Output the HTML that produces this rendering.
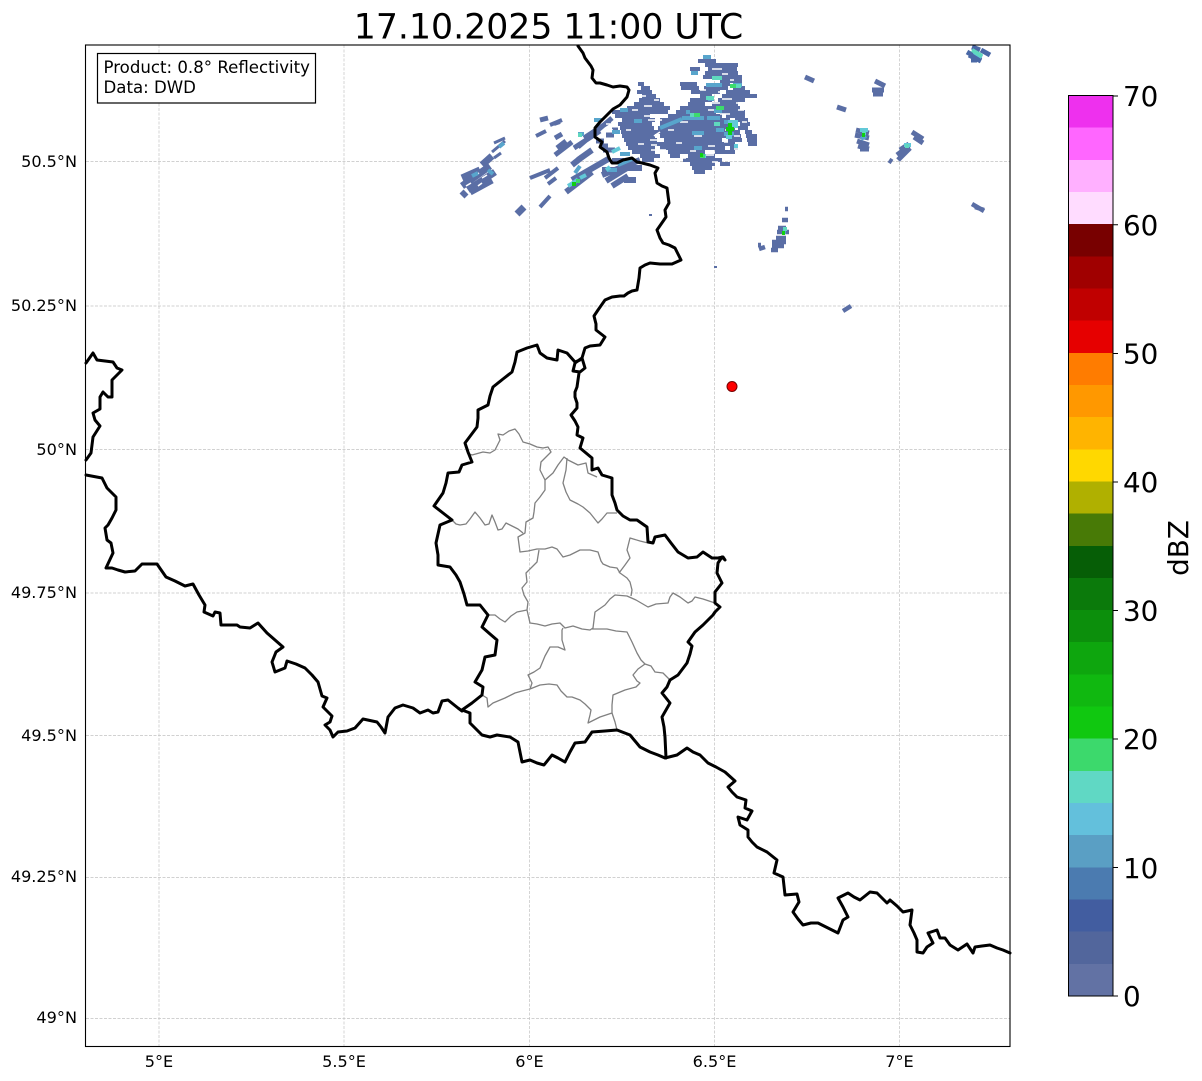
<!DOCTYPE html>
<html><head><meta charset="utf-8"><style>
html,body{margin:0;padding:0;background:#fff}
svg{display:block}
text{font-family:"DejaVu Sans","Liberation Sans",sans-serif;fill:#000}
</style></head><body>
<svg width="1202" height="1081" viewBox="0 0 1202 1081" xmlns="http://www.w3.org/2000/svg">
<rect width="1202" height="1081" fill="#fff"/>
<text x="548.5" y="38.5" font-size="34.7" text-anchor="middle">17.10.2025 11:00 UTC</text>

<!-- grid -->
<g stroke="#c2c2c2" stroke-width="0.7" stroke-dasharray="3 1.5" fill="none">
<path d="M159 45V1046M344 45V1046M529.5 45V1046M714.5 45V1046M899.5 45V1046"/>
<path d="M86 161.5H1010M86 306H1010M86 449.5H1010M86 593H1010M86 735.5H1010M86 877.5H1010M86 1018.5H1010"/>
</g>

<!-- radar: main mass rows -->
<g fill="none" stroke="#5a6ea5" stroke-width="4">
<path d="M698 61h18M705 65h33M690 69h10M708 69h29M705 73h33M703 77h39M720 81h22
M638 84h6M680 84h17M720 84h10M641 88h9M681 88h18M704 88h24M733 88h12M637 92h15M691 92h29M726 92h24
M642 96h14M700 96h12M722 96h35M639 100h21M690 100h22M718 100h27M634 104h30M688 104h17M712 104h26
M627 108h43M680 108h36M722 108h18M612 112h56M676 112h40M720 112h25M615 116h35M668 116h54M726 116h19
M622 120h33M660 120h70M735 120h13M618 124h34M660 124h75M740 124h10M620 128h34M658 128h77M738 128h10
M621 132h33M654 132h86M745 132h7M622 136h33M660 136h81M746 136h11M624 140h33M664 140h58M728 140h14M747 140h10
M626 144h30M656 144h79M748 144h9M628 148h27M660 148h65M730 148h8M632 152h23M668 152h37M715 152h20
M640 156h20M670 156h10M688 156h27M642 160h12M683 160h39M690 164h25M720 164h10M692 168h20M694 172h11"/>
<!-- west of main / border region -->
<path stroke-width="5" d="M578 147L612 118M584 138L610 121M574 148L600 131M603 150h12M600 146h8M596 141h8M612 130h6M606 135h8
M555 155L572 142M557 148L566 141M555 138L562 134M540 120L548 118"/>
<path d="M606 181L632 165M602 175L640 160M612 186L628 176M618 168h24M602 170h20M612 161h12M624 180h12" stroke-width="6"/>
<path d="M566 192L592 172M572 180L610 158M578 160L592 150M572 165L582 157" stroke-width="6"/>
<path d="M530 178L550 170M545 178L558 168M548 184L556 178M540 207L550 196M536 136L546 131" stroke-width="4"/>
<path d="M517 214L524 207" stroke-width="7"/>
<path d="M550 125L562 120M554 124L560 122" stroke-width="4"/>
<path d="M494 143L505 138M492 152L505 141M494 158L501 153" stroke-width="3"/>
<!-- west cell -->
<path d="M462 178L480 170M462 186L490 166M468 190L495 172M470 192L492 180M482 165L492 156M462 196L466 192" stroke-width="7"/>
<!-- small eastern cells -->
<path d="M805 77l9 4M837 107l9 3M875 81l10 5M872 90h12M873 94h10M856 130l13 3M855 135l14 3M857 141l12 4M858 146l11 3M860 149h9M889 160l3 2M898 160l12-12M897 155l12-9M900 150l9-6M912 132l11 7M914 137l9 6" stroke-width="5"/>
<path d="M969 55l12 6M967 52l14 8M972 47l8 3M981 50l9 5M971 60h6" stroke-width="5" stroke="#4a68a6"/>
<path d="M972 204l12 7M975 207l9 3M843 311l8-5M759 249l6-2M758 245h3M771 250h7M772 246h12M772 242h14M776 238h10M777 232h12M778 228h8M782 220h6M785 209h3" stroke-width="4.5"/>
<path d="M714 267h3M649 215h3" stroke-width="2"/>
</g>
<!-- white gaps -->
<g fill="none" stroke="#fff" stroke-width="1.6">
<path d="M644 116h22M648 120h14M652 124h8M650 140h8M651 145h6M651 150h6M654 136l6-4M606 124h12M606 130h7M608 139h9M610 146h5
M698 82h8M722 74h6M712 69h10M730 80h4M700 90h6M718 92h6M722 99h10M712 103h8M736 103h6M708 110h6M720 114h10M738 110h6M742 122h5M725 130h8M734 136h6M724 142h4M734 149h5M708 146h7M690 151h6M680 158h6M706 155h8M712 162h6
M680 122h8M668 130h6M694 136h8M676 143h6M660 150h6M640 96h6M626 130h5M638 144h6M632 110h6M644 106h8M654 100h5
M474 176l5-3M466 186l5-3M482 178l5-3M478 186l4-3"/>
</g>

<!-- highlights -->
<g fill="none" stroke-width="4">
<path stroke="#58a5cc" d="M703 57h8M691 73h7M706 85h16M733 85h9M708 99h6M714 111h8M707 118h13M660 128l22-9M682 118h22M692 133h12M716 130h8M724 134h10M724 122h10M694 148h8M686 112h4M620 110h8M594 120h8M612 132h8M620 154h10M618 165l14-6M607 170h10M575 173l5-7M634 121h8M499 147l5-4M472 176l6-3M488 170l5 4M572 184l6-5M578 134h6M783 232h3M866 136l-5 3" />
<path stroke="#62c9d8" d="M728 122h10M728 126h10M726 137h6M734 146h4M860 130h8M904 145h7M974 52l8 5M612 152l8-4M700 156h6M568 186l10-6M580 178l6-3M606 170l4-3"/>
<path stroke="#5fd8be" d="M712 78h10M733 86h8M706 98h8M714 124h6M690 115h8M578 135h4M972 50l10 6M862 133h4M905 146h4M783 229h4"/>
<path stroke="#3ddb6c" d="M694 115h6M730 86h6M716 108h8M700 156h5M576 181h4"/>
<path stroke="#10d010" d="M726 129h8M728 133h4M728 125h4M572 184h4M700 155h3M862 135h3M782 233h3" />
</g>

<!-- Lux cantons -->
<g fill="none" stroke="#808080" stroke-width="1.3" stroke-linejoin="round">
<path d="M467 453L472 455L483 452L490 453L495 450L500 440L498 434L503 435L509 431L515 429L519 434L523 442L530 444L537 447L543 448L548 447L551 452L545 458L541 462L540 470L543 476L545 480L545 490L540 497L535 503L534 512L533 518L526 522L525 533L518 537L520 552L528 551L537 549L545 549L552 547L557 549L563 557L570 555L580 550L590 550L598 552L601 561L603 564L610 567L617 568L620 573L627 578L630 582L632 590L631 596"/>
<path d="M452 520L456 524L460 525L466 524L470 519L475 512L480 518L485 525L489 524L492 515L495 522L498 530L502 529L506 523L512 526L518 529L523 533"/>
<path d="M545 480L553 473L558 465L564 457L568 460L574 463L578 465L586 463L588 473L597 477"/>
<path d="M567 458L566 470L563 483L566 492L570 500L578 504L583 507L590 513L598 523L602 519L607 513L617 513"/>
<path d="M648 543L640 541L630 538L627 550L630 558L625 565L619 573"/>
<path d="M539 550L537 562L531 568L526 573L527 582L522 588L524 595L528 602L527 610L530 623L537 624L545 626L552 624L560 623L565 628L573 626L582 629L590 630L593 628L595 612L605 605L610 599L615 595L627 596L636 600L648 607L656 604L668 603L670 597L673 593L680 597L688 603L692 601L695 597L703 599L715 603"/>
<path d="M592 629L607 629L616 631L627 632L632 642L637 653L641 660L645 664L651 666L655 672L663 673L670 680"/>
<path d="M645 664L638 669L633 675L637 681L640 683L636 687L625 690L613 695L612 705L612 713L600 717L588 723L590 715L591 710L585 704L580 700L572 697L567 697L561 691L557 685L549 684L540 685L530 689L522 691L515 693L505 698L493 703L488 707L487 698L482 695"/>
<path d="M612 713L615 722L617 730"/>
<path d="M530 689L532 683L528 675L534 672L540 668L545 656L550 647L558 647L565 650L562 640L562 630L563 628"/>
<path d="M488 615L495 615L500 619L505 622L511 616L517 612L527 610"/>
</g>

<!-- borders -->
<g fill="none" stroke="#000" stroke-width="3" stroke-linejoin="round" stroke-linecap="round">
<path d="M578 46L583 53L585 58L588 62L591 66L593 70L592 78L596 83L600 83L607 85L613 87L620 86L627 87L629 90L627 97L620 105L613 109L607 115L600 122L595 128L595 137L602 142L600 147L607 152L609 158L612 163L617 163L623 160L632 158L637 162L642 163L650 165L658 168L655 173L657 183L662 186L667 188L669 203L665 210L666 217L657 230L660 238L663 243L669 245L675 248L678 254L681 260L672 264L660 264L650 263L645 265L640 268L639 278L637 290L632 291L628 293L624 296L620 296L612 297L605 300L598 310L594 316L596 324L596 330L605 337L600 345L590 346L585 348L582 358L585 368L580 372L573 371L575 363L582 358M579 373L578 380L577 387L575 392L575 397L577 403L577 408L571 415L575 421L578 427L577 435L583 438L580 448L586 453L592 458L592 470L598 468L602 475L612 478L612 495L615 503L617 510L623 516L630 520L637 520L647 527L648 542L653 543L655 537L665 535L671 543L678 552L688 558L697 557L703 552L712 558L718 558L723 557L725 560L722 557L718 563L717 573L722 583L715 592L715 603L720 607L715 612L713 615L708 620L703 625L695 632L688 642L692 646L690 654L687 663L678 675L670 680L667 687L662 693L670 703L666 710L662 717L664 727L665 737L666 758"/>
<path d="M580 360L575 362L567 353L558 350L557 360L547 358L540 353L537 345L527 348L517 352L515 362L512 372L503 379L493 387L490 396L488 405L478 410L478 418L477 427L471 435L465 443L468 452L472 462L462 465L459 472L448 473L446 483L443 493L434 506L443 513L452 520L440 525L436 543L438 555L438 565L450 567L456 575L460 582L464 594L467 605L480 605L488 615L482 627L490 634L497 640L495 655L485 657L482 670L475 682L483 687L482 695L472 703L462 710L470 713L470 723L476 729L482 735L490 737L497 735L510 737L518 742L520 752L522 762L530 760L537 763L544 765L552 755L558 758L565 762L570 752L575 743L585 742L592 732L605 731L617 730L630 735L635 741L640 747L650 752L658 755L665 758L677 755L687 748L693 752L700 755L708 763L716 767L725 772L735 781L728 787L732 792L737 797L746 800L745 808L752 811L747 820L738 817L740 825L748 830L748 837L752 842L757 847L767 852L777 860L774 873L783 877L784 886L785 895L797 894L799 902L793 912L798 919L803 925L811 923L818 923L828 928L838 933L843 920L848 917L843 907L838 898L848 893L854 897L860 900L870 892L877 893L882 898L887 903L890 900L897 906L903 912L912 910L910 925L914 933L917 940L917 952L923 953L927 947L933 943L928 933L937 930L940 938L945 938L950 945L958 950L967 944L973 953L975 947L982 946L990 945L997 948L1003 950L1010 953"/>
<path d="M86 363L93 353L97 360L105 361L113 362L117 368L122 370L112 380L112 397L108 397L103 392L100 397L100 409L93 413L95 420L100 426L93 437L92 445L91 453L86 460"/>
<path d="M86 475L102 478L107 488L116 497L116 510L112 518L108 525L105 528L107 540L111 543L113 553L106 568L112 568L118 570L125 572L135 571L142 564L157 564L166 577L175 581L185 586L193 584L199 595L205 605L204 612L213 616L215 612L220 613L221 625L237 625L240 627L250 628L258 623L267 633L275 640L283 647L276 652L272 662L275 672L285 668L287 661L296 664L305 668L312 675L318 682L322 696L327 698L323 707L332 716L330 722L325 725L330 730L333 737L338 732L347 731L355 728L363 719L377 722L381 727L385 733L388 717L395 708L403 705L413 708L420 713L428 710L433 713L438 712L442 701L448 700L458 708L462 711"/>
</g>

<!-- spines -->
<rect x="85.5" y="45" width="924.5" height="1001.5" fill="none" stroke="#000" stroke-width="1.1"/>

<!-- red marker -->
<circle cx="732" cy="386.5" r="5" fill="#ff0000" stroke="#700" stroke-width="1"/>

<!-- note -->
<rect x="97.5" y="53.5" width="218" height="49.5" fill="#fff" stroke="#000" stroke-width="1.2"/>
<text x="103.5" y="73" font-size="16.6">Product: 0.8° Reflectivity</text>
<text x="103.5" y="93" font-size="16.6">Data: DWD</text>

<!-- tick labels -->
<g font-size="16.1" text-anchor="end">
<text x="77" y="167">50.5°N</text>
<text x="77" y="311">50.25°N</text>
<text x="77" y="455">50°N</text>
<text x="77" y="598">49.75°N</text>
<text x="77" y="741">49.5°N</text>
<text x="77" y="882">49.25°N</text>
<text x="77" y="1023">49°N</text>
</g>
<g font-size="16.1" text-anchor="middle">
<text x="159" y="1067">5°E</text>
<text x="344" y="1067">5.5°E</text>
<text x="529.5" y="1067">6°E</text>
<text x="714.5" y="1067">6.5°E</text>
<text x="899.5" y="1067">7°E</text>
</g>

<!-- colorbar -->
<g shape-rendering="crispEdges">
<rect x="1068" y="95.5" width="45" height="33" fill="#ee30ee"/>
<rect x="1068" y="127.7" width="45" height="33" fill="#ff66ff"/>
<rect x="1068" y="159.8" width="45" height="33" fill="#ffb0ff"/>
<rect x="1068" y="192" width="45" height="33" fill="#ffdcff"/>
<rect x="1068" y="224.2" width="45" height="33" fill="#780000"/>
<rect x="1068" y="256.3" width="45" height="33" fill="#a00000"/>
<rect x="1068" y="288.5" width="45" height="33" fill="#c00000"/>
<rect x="1068" y="320.6" width="45" height="33" fill="#e60000"/>
<rect x="1068" y="352.8" width="45" height="33" fill="#ff7c00"/>
<rect x="1068" y="385" width="45" height="33" fill="#ff9800"/>
<rect x="1068" y="417.1" width="45" height="33" fill="#ffb400"/>
<rect x="1068" y="449.3" width="45" height="33" fill="#ffd800"/>
<rect x="1068" y="481.4" width="45" height="33" fill="#b0b000"/>
<rect x="1068" y="513.6" width="45" height="33" fill="#487a06"/>
<rect x="1068" y="545.8" width="45" height="33" fill="#065e06"/>
<rect x="1068" y="577.9" width="45" height="33" fill="#0b7a0b"/>
<rect x="1068" y="610.1" width="45" height="33" fill="#0c8f0c"/>
<rect x="1068" y="642.2" width="45" height="33" fill="#0ea60e"/>
<rect x="1068" y="674.4" width="45" height="33" fill="#10b810"/>
<rect x="1068" y="706.6" width="45" height="33" fill="#10c810"/>
<rect x="1068" y="738.7" width="45" height="33" fill="#3cd96c"/>
<rect x="1068" y="770.9" width="45" height="33" fill="#60d8c4"/>
<rect x="1068" y="803" width="45" height="33" fill="#63c0dc"/>
<rect x="1068" y="835.2" width="45" height="33" fill="#5a9fc4"/>
<rect x="1068" y="867.4" width="45" height="33" fill="#4b7bb0"/>
<rect x="1068" y="899.5" width="45" height="33" fill="#425da0"/>
<rect x="1068" y="931.7" width="45" height="33" fill="#52669c"/>
<rect x="1068" y="963.8" width="45" height="32.2" fill="#6272a4"/>
</g>
<rect x="1068.5" y="95.5" width="44.5" height="900.5" fill="none" stroke="#000" stroke-width="1"/>
<path d="M1113 96h5M1113 224.7h5M1113 353.5h5M1113 482h5M1113 610.5h5M1113 739h5M1113 867.5h5M1113 996h5" stroke="#000" stroke-width="1"/>
<g font-size="27.78">
<text x="1123" y="106">70</text>
<text x="1123" y="235">60</text>
<text x="1123" y="363.5">50</text>
<text x="1123" y="492">40</text>
<text x="1123" y="620.5">30</text>
<text x="1123" y="749">20</text>
<text x="1123" y="878">10</text>
<text x="1123" y="1006">0</text>
</g>
<text transform="translate(1188 548) rotate(-90)" font-size="27.78" text-anchor="middle">dBZ</text>
</svg>
</body></html>
